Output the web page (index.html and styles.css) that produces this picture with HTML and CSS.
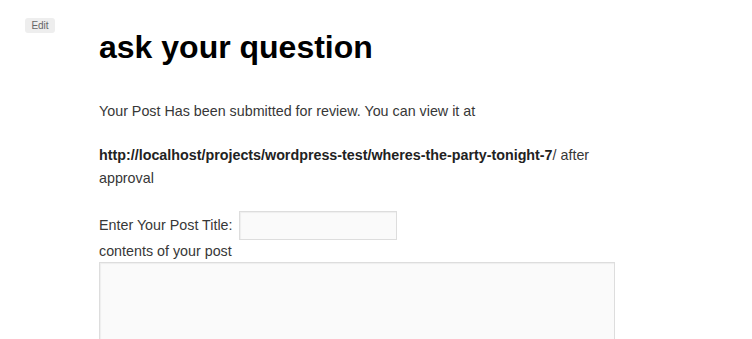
FILE: index.html
```html
<!DOCTYPE html>
<html lang="en">
<head>
    <meta charset="UTF-8">
    <title>ask your question</title>
    <link rel="stylesheet" href="styles.css">
</head>
<body>
    <div class="page">
        <a class="edit-link" href="#">Edit</a>
        <div class="entry">
            <h1 class="entry-title">ask your question</h1>
            <p>Your Post Has been submitted for review. You can view it at</p>
            <p><strong>http://localhost/projects/wordpress-test/wheres-the-party-tonight-7</strong>/ after approval</p>
            <form class="post-form">
                <div class="field-row">
                    <label for="post-title">Enter Your Post Title:</label>
                    <input type="text" id="post-title" class="title-input">
                </div>
                <label for="post-content" class="block-label">contents of your post</label>
                <textarea id="post-content" class="content-input"></textarea>
            </form>
        </div>
    </div>
</body>
</html>
```

FILE: styles.css
```css
body {
    margin: 0;
    font-family: "Liberation Sans", Arial, sans-serif;
    font-size: 14.3px;
    line-height: 23px;
    color: #373737;
    background-color: #fff;
}
.page {
    display: flex;
    align-items: flex-start;
    gap: 44px;
    padding: 18px 0 0 25px;
}
.edit-link {
    display: block;
    width: 30px;
    box-sizing: border-box;
    text-align: center;
    font-size: 10px;
    line-height: 15px;
    color: #666;
    text-decoration: none;
    background-color: #eee;
    border-radius: 3px;
}
.entry {
    width: 526px;
}
.entry-title {
    margin: 9px 0 33px;
    font-size: 32px;
    line-height: 40px;
    font-weight: bold;
    color: #000;
}
p {
    margin: 0 0 21px;
}
strong {
    color: #222;
}
.post-form {
    margin: 0;
}
.field-row {
    display: flex;
    align-items: center;
    gap: 6px;
}
.title-input {
    box-sizing: border-box;
    width: 158px;
    height: 29px;
    padding: 3px;
    border: 1px solid #ddd;
    background-color: #fafafa;
    box-shadow: inset 1px 1px 1px rgba(0, 0, 0, 0.05);
    font: inherit;
}
.block-label {
    display: block;
    line-height: 22px;
}
.content-input {
    display: block;
    box-sizing: border-box;
    width: 516px;
    height: 160px;
    padding: 3px;
    border: 1px solid #ddd;
    background-color: #fafafa;
    box-shadow: inset 1px 1px 1px rgba(0, 0, 0, 0.05);
    resize: none;
    font: inherit;
}
```
